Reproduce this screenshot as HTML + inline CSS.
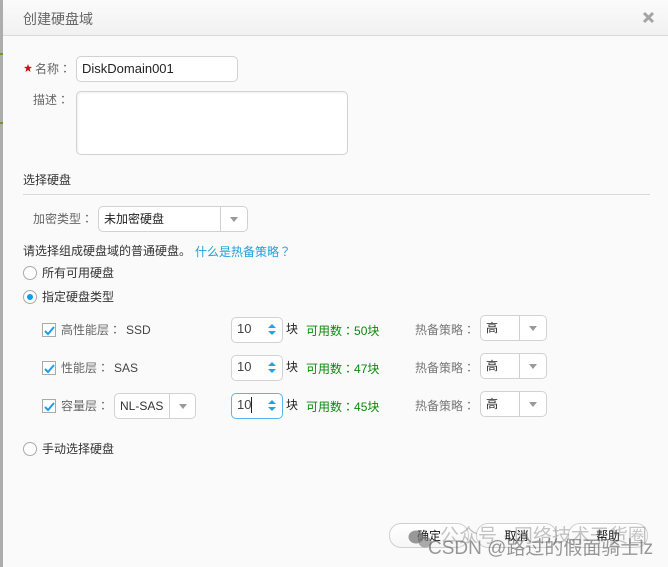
<!DOCTYPE html>
<html><head><meta charset="utf-8"><style>
html,body{margin:0;padding:0}
body{width:668px;height:567px;position:relative;overflow:hidden;background:#fafafa;font-family:"Liberation Sans","WenQuanYi Zen Hei","Noto Sans CJK SC",sans-serif;font-size:12px;color:#333}
.a{position:absolute;white-space:nowrap}
.t{position:absolute;white-space:nowrap;line-height:16px;color:#222}
.c{font-family:"Noto Sans CJK TC",sans-serif}
.box{position:absolute;box-sizing:border-box;background:#fff;border:1px solid #d2d2d2;border-radius:5px}
.sel .d{position:absolute;top:0;bottom:0;border-left:1px solid #d2d2d2}
.sel .d:after{content:"";position:absolute;left:50%;top:10px;margin-left:-4px;border:4px solid transparent;border-top:5px solid #999;border-bottom:0}
.rad{position:absolute;box-sizing:border-box;width:14px;height:14px;border:1px solid #aaa;border-radius:50%;background:#fff}
.cb{position:absolute;box-sizing:border-box;width:14px;height:14px;border:1px solid #aaa;background:#fff}
.sp:before{content:"";position:absolute;left:36px;top:6px;border:4px solid transparent;border-bottom:4px solid #1aa3f0;border-top:0}
.sp:after{content:"";position:absolute;left:36px;top:13px;border:4px solid transparent;border-top:4px solid #1aa3f0;border-bottom:0}
.btn{position:absolute;box-sizing:border-box;top:523px;height:25px;border:1px solid #d0d0d0;border-radius:12px;background:linear-gradient(#fff,#f6f6f6);text-align:center;line-height:24px;color:#111}
.g{color:#0a8a0a}
.n{font-size:13px;color:#444}
</style></head><body>
<div class="a" style="left:0;top:0;width:3px;height:567px;background:#adadad"></div>
<div class="a" style="left:0;top:53px;width:3px;height:2px;background:#6a9a2a"></div>
<div class="a" style="left:0;top:122px;width:3px;height:2px;background:#6a9a2a"></div>
<div class="a" style="left:3px;top:0;width:665px;height:567px;background:#fafafa;border-radius:6px 0 0 6px"></div>
<div class="a" style="left:3px;top:0;width:665px;height:35px;background:linear-gradient(#fbfbfb,#f1f1f1);border-bottom:1px solid #d9d9d9;border-radius:6px 0 0 0"></div>
<div class="a" style="left:23px;top:11px;font-size:14px;line-height:16px;color:#666">创建硬盘域</div>
<svg class="a" style="left:642px;top:11px" width="13" height="13" viewBox="0 0 13 13"><path d="M2 2L11 11M11 2L2 11" stroke="#a4a4a4" stroke-width="3"/></svg>

<svg class="a" style="left:24px;top:64px" width="8" height="8" viewBox="0 0 7 7"><path d="M3.5 0L4.4 2.4L7 2.6L5 4.2L5.7 7L3.5 5.4L1.3 7L2 4.2L0 2.6L2.6 2.4Z" fill="#c8101a"/></svg>
<div class="t" style="left:35px;top:61px;color:#666">名称<span class="c">：</span></div>
<div class="box" style="left:76px;top:56px;width:162px;height:26px"></div>
<div class="t" style="left:82px;top:61px;font-size:13px;color:#222">DiskDomain001</div>
<div class="t" style="left:33px;top:92px;color:#666">描述<span class="c">：</span></div>
<div class="box" style="left:76px;top:91px;width:272px;height:64px;box-shadow:inset 1px 1px 2px #eee"></div>

<div class="t" style="left:23px;top:172px;color:#333">选择硬盘</div>
<div class="a" style="left:23px;top:194px;width:627px;height:1px;background:#d9d9d9"></div>

<div class="t" style="left:33px;top:211px;color:#666">加密类型<span class="c">：</span></div>
<div class="box sel" style="left:98px;top:206px;width:150px;height:26px"><div class="d" style="left:121px;right:0"></div></div>
<div class="t" style="left:104px;top:211px">未加密硬盘</div>

<div class="t" style="left:23px;top:243px;color:#333">请选择组成硬盘域的普通硬盘。</div>
<div class="t" style="left:195px;top:244px;color:#20a0dc">什么是热备策略<span class="c">？</span></div>

<div class="rad" style="left:23px;top:266px"></div>
<div class="t" style="left:42px;top:265px;color:#333">所有可用硬盘</div>
<div class="rad" style="left:23px;top:290px"><div class="a" style="left:3px;top:3px;width:6px;height:6px;border-radius:50%;background:#0a9cf0"></div></div>
<div class="t" style="left:42px;top:289px;color:#333">指定硬盘类型</div>

<div class="cb" style="left:42px;top:323px"></div>
<svg class="a" style="left:43px;top:324px" width="13" height="13" viewBox="0 0 13 13"><path d="M2 7L5 10L11 3" fill="none" stroke="#1a9cf0" stroke-width="2"/></svg>
<div class="t" style="left:61px;top:322px;color:#666">高性能层<span class="c">：</span></div>
<div class="t" style="left:126px;top:322px;color:#444">SSD</div>

<div class="cb" style="left:42px;top:361px"></div>
<svg class="a" style="left:43px;top:362px" width="13" height="13" viewBox="0 0 13 13"><path d="M2 7L5 10L11 3" fill="none" stroke="#1a9cf0" stroke-width="2"/></svg>
<div class="t" style="left:61px;top:360px;color:#666">性能层<span class="c">：</span></div>
<div class="t" style="left:114px;top:360px;color:#444">SAS</div>

<div class="cb" style="left:42px;top:399px"></div>
<svg class="a" style="left:43px;top:400px" width="13" height="13" viewBox="0 0 13 13"><path d="M2 7L5 10L11 3" fill="none" stroke="#1a9cf0" stroke-width="2"/></svg>
<div class="t" style="left:61px;top:398px;color:#666">容量层<span class="c">：</span></div>
<div class="box sel" style="left:114px;top:393px;width:82px;height:26px"><div class="d" style="left:54px;right:0"></div></div>
<div class="t" style="left:120px;top:398px;color:#333">NL-SAS</div>

<div class="box sp" style="left:231px;top:317px;width:52px;height:26px"></div>
<div class="t n" style="left:237px;top:321px">10</div>
<div class="t" style="left:286px;top:321px">块</div>
<div class="t g" style="left:306px;top:323px">可用数<span class="c">：</span>50块</div>
<div class="t" style="left:415px;top:322px;color:#777">热备策略<span class="c">：</span></div>
<div class="box sel" style="left:480px;top:315px;width:67px;height:26px"><div class="d" style="left:38px;right:0"></div></div>
<div class="t" style="left:486px;top:320px">高</div>

<div class="box sp" style="left:231px;top:355px;width:52px;height:26px"></div>
<div class="t n" style="left:237px;top:359px">10</div>
<div class="t" style="left:286px;top:359px">块</div>
<div class="t g" style="left:306px;top:361px">可用数<span class="c">：</span>47块</div>
<div class="t" style="left:415px;top:360px;color:#777">热备策略<span class="c">：</span></div>
<div class="box sel" style="left:480px;top:353px;width:67px;height:26px"><div class="d" style="left:38px;right:0"></div></div>
<div class="t" style="left:486px;top:358px">高</div>

<div class="box sp" style="left:231px;top:393px;width:52px;height:26px;border-color:#5ab4ee"></div>
<div class="t n" style="left:237px;top:397px">10</div>
<div class="a" style="left:251px;top:397px;width:1px;height:16px;background:#222"></div>
<div class="t" style="left:286px;top:397px">块</div>
<div class="t g" style="left:306px;top:399px">可用数<span class="c">：</span>45块</div>
<div class="t" style="left:415px;top:398px;color:#777">热备策略<span class="c">：</span></div>
<div class="box sel" style="left:480px;top:391px;width:67px;height:26px"><div class="d" style="left:38px;right:0"></div></div>
<div class="t" style="left:486px;top:396px">高</div>

<div class="rad" style="left:23px;top:442px"></div>
<div class="t" style="left:42px;top:441px;color:#333">手动选择硬盘</div>

<div class="btn" style="left:389px;width:80px">确定</div>
<div class="btn" style="left:476px;width:81px">取消</div>
<div class="btn" style="left:568px;width:80px">帮助</div>

<svg class="a" style="left:408px;top:529px" width="32" height="22" viewBox="0 0 32 22"><ellipse cx="8" cy="8" rx="7.5" ry="6.5" fill="#777" opacity=".75"/><ellipse cx="17" cy="13" rx="6.5" ry="5.5" fill="#777" opacity=".6"/></svg>
<div class="a" style="left:440px;top:526px;font-size:19px;line-height:22px;color:rgba(110,110,110,.4)">公众号 · 网络技术干货圈</div>
<div class="a" style="left:428px;top:538px;font-size:19px;line-height:22px;color:rgba(90,90,90,.62)">CSDN @路过的假面骑士lz</div>
</body></html>
